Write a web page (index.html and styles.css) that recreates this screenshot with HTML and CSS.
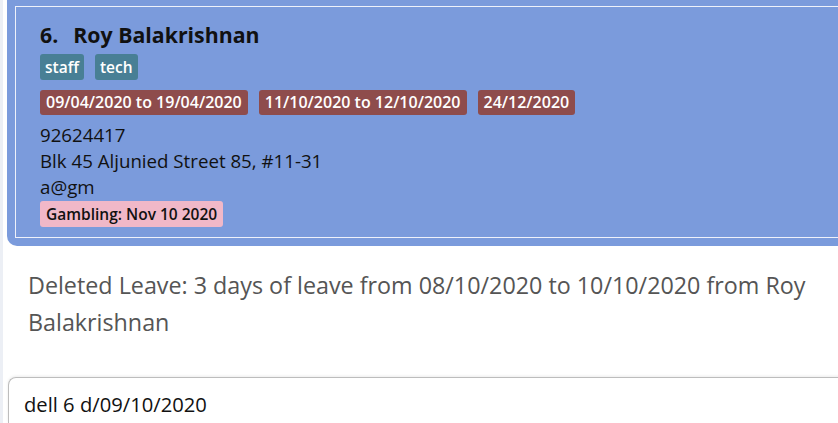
FILE: index.html
```html
<!DOCTYPE html>
<html>
<head>
<meta charset="utf-8">
<link rel="stylesheet" href="styles.css">
</head>
<body>
<div class="page">
  <div class="card">
    <div class="card-inner">
      <div class="name"><span class="idx">6.</span>Roy Balakrishnan</div>
      <div class="tags">
        <span class="tag tag-role">staff</span>
        <span class="tag tag-role">tech</span>
      </div>
      <div class="tags tags-leave">
        <span class="tag tag-leave">09/04/2020 to 19/04/2020</span>
        <span class="tag tag-leave">11/10/2020 to 12/10/2020</span>
        <span class="tag tag-leave">24/12/2020</span>
      </div>
      <div class="info">92624417</div>
      <div class="info">Blk 45 Aljunied Street 85, #11-31</div>
      <div class="info">a@gm</div>
      <div class="tags tags-note">
        <span class="tag tag-note">Gambling: Nov 10 2020</span>
      </div>
    </div>
  </div>
  <div class="result">Deleted Leave: 3 days of leave from 08/10/2020 to 10/10/2020 from Roy Balakrishnan</div>
  <div class="command">dell 6 d/09/10/2020</div>
</div>
</body>
</html>
```
FILE: styles.css
```css
html, body {
  margin: 0;
  padding: 0;
  background: #ffffff;
  width: 838px;
  height: 423px;
  overflow: hidden;
}
.page {
  display: flex;
  flex-direction: column;
  height: 423px;
  border-left: 3px solid #eceff5;
  padding-left: 4px;
  font-family: "Open Sans", "Noto Sans", sans-serif;
}
.card {
  background: #7b9bdc;
  border-radius: 0 0 0 10px;
  padding: 6px 0 8px 8px;
  margin-right: -40px;
}
.card-inner {
  border: 1px solid #eef1fa;
  border-right: none;
  padding: 14px 0 10px 24px;
  display: flex;
  flex-direction: column;
}
.name {
  font-weight: 700;
  font-size: 21.3px;
  color: #111;
  line-height: 28px;
  margin-bottom: 5px;
}
.idx {
  margin-right: 15px;
}
.tags {
  display: flex;
  gap: 11px;
  margin-bottom: 10px;
}
.tags-leave {
  margin-bottom: 7px;
}
.tags-note {
  margin-bottom: 0;
  margin-top: 1px;
}
.tag {
  border-radius: 3px;
  font-weight: 600;
  font-size: 16px;
  line-height: 25px;
  padding: 0 6px;
  color: #ffffff;
}
.tag-role {
  background: #487f95;
  font-size: 15.5px;
  line-height: 26px;
  padding: 0 5px;
}
.tag-leave {
  background: #8e4c4c;
}
.tag-note {
  background: #f1b8c8;
  color: #111;
  font-size: 15.5px;
  line-height: 26px;
}
.info {
  font-size: 18.7px;
  line-height: 26px;
  color: #111;
}
.result {
  padding: 17px 20px 0 21px;
  font-size: 23.3px;
  line-height: 37px;
  color: #555555;
  height: 110px;
  box-sizing: border-box;
  margin-top: 4px;
}
.command {
  margin-top: 17px;
  margin-left: 1px;
  margin-right: -20px;
  border: 1px solid #bdbdbd;
  border-right: none;
  border-bottom: none;
  border-radius: 8px 0 0 0;
  padding: 12px 0 0 15px;
  font-size: 20.2px;
  color: #111;
  flex: 1;
  box-shadow: 0 -1px 3px rgba(0,0,0,0.08);
}
```
